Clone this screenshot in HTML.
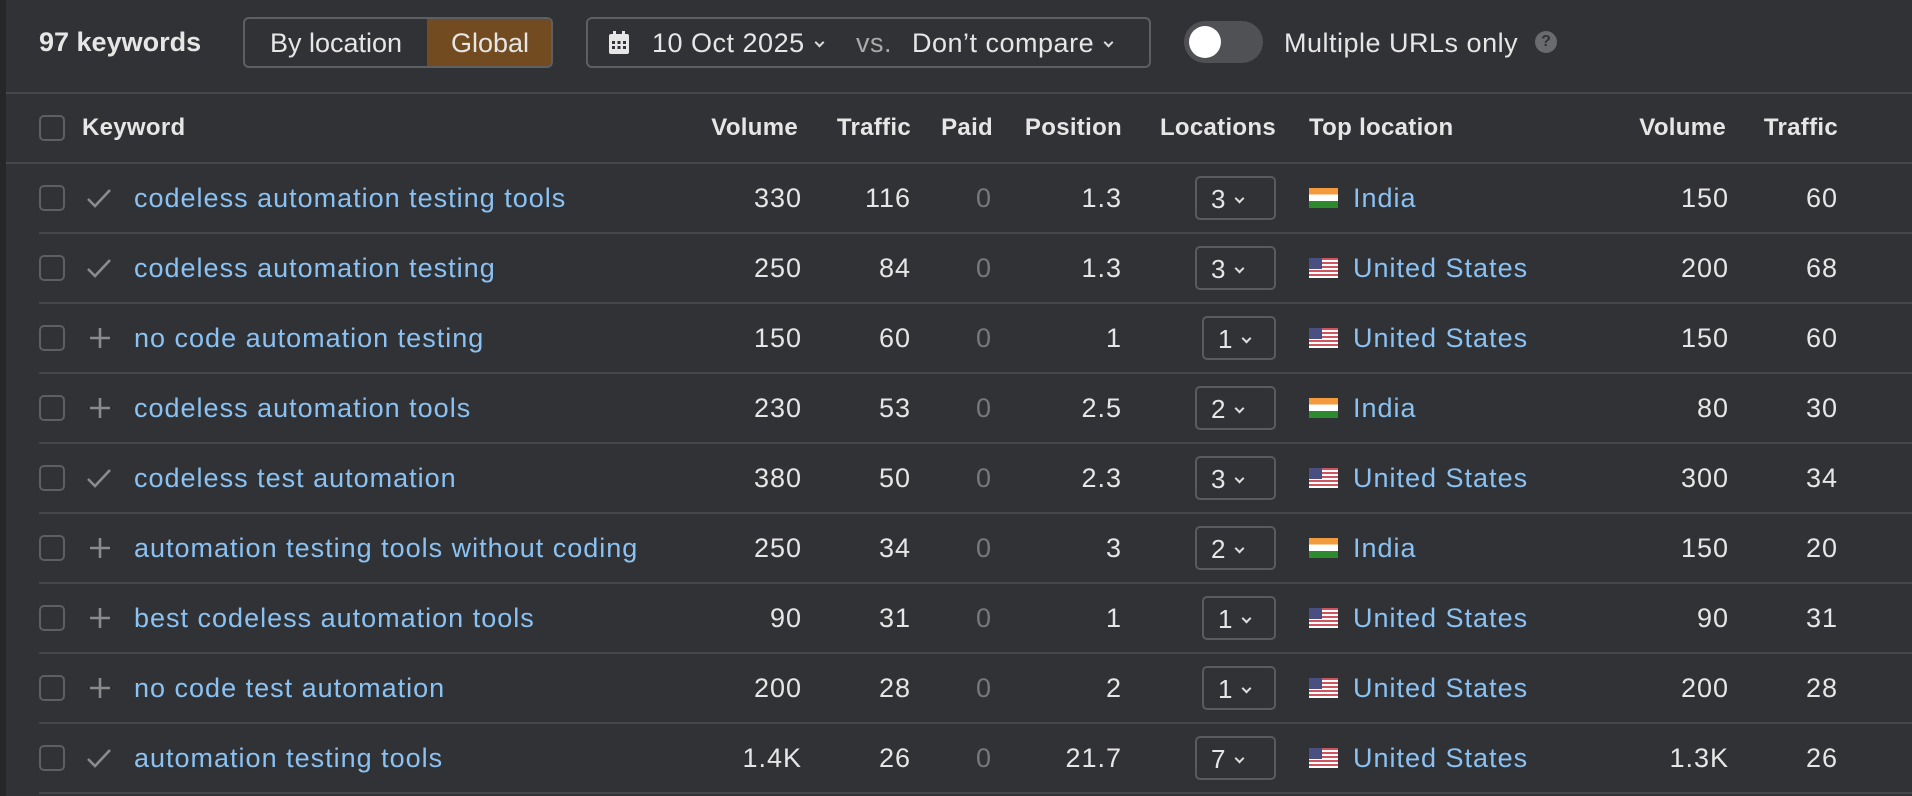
<!DOCTYPE html>
<html><head><meta charset="utf-8"><style>
*{box-sizing:border-box;margin:0;padding:0}
body{width:1912px;height:796px;background:#313235;font-family:"Liberation Sans",Arial,sans-serif;color:#e6e6e6;position:relative;overflow:hidden}
.strip{position:absolute;left:0;top:0;width:6px;height:796px;background:#262729}
.a{position:absolute;white-space:nowrap}
.hl{position:absolute;height:2px;background:#46474a}
.cb{position:absolute;width:26px;height:26px;border:2px solid #5e5f62;border-radius:5px}
.r{text-align:right}
.lnk{color:#8ac2f4}
.c{font-size:27px;letter-spacing:1px}
.h{font-size:24px;font-weight:bold;letter-spacing:0.3px}
.dd{position:absolute;height:44px;border:2px solid #5a5b5e;border-radius:5px;font-size:26px;line-height:42px;padding-left:14px}
.chev{display:inline-block;width:7px;height:7px;border-right:2px solid #ddd;border-bottom:2px solid #ddd;transform:rotate(45deg);margin-left:11px;position:relative;top:-6px}
.in{position:absolute;width:29px;height:20px;background:linear-gradient(#f39a3c 0 33%,#fff 33% 66%,#2e8a2e 66%)}
.us{position:absolute;width:29px;height:20px;background:repeating-linear-gradient(#d0545e 0 2px,#fff 2px 4px)}
.us:after{content:"";position:absolute;left:0;top:0;width:13px;height:11px;background:#4a4f82}
</style></head><body>
<div class="strip"></div>
<div class="a" style="left:39px;top:27px;font-size:27px;font-weight:bold">97 keywords</div>
<div class="a" style="left:243px;top:17px;width:310px;height:51px;border:2px solid #5e5f62;border-radius:6px;overflow:hidden">
<div class="a" style="left:0;top:0;width:182px;height:47px;line-height:49px;text-align:center;font-size:27px">By location</div>
<div class="a" style="left:182px;top:0;width:126px;height:47px;line-height:49px;text-align:center;font-size:27px;background:#724c20">Global</div></div>
<div class="a" style="left:586px;top:17px;width:565px;height:51px;border:2px solid #5e5f62;border-radius:6px;font-size:27px;line-height:49px;letter-spacing:0.5px">
<svg style="position:absolute;left:20px;top:12px" width="22" height="24" viewBox="0 0 22 24"><rect x="1" y="3" width="20" height="20" rx="2" fill="#e6e6e6"/><rect x="5" y="0" width="3" height="5" fill="#e6e6e6"/><rect x="14" y="0" width="3" height="5" fill="#e6e6e6"/><g fill="#313235"><rect x="4" y="10" width="3" height="3"/><rect x="9.5" y="10" width="3" height="3"/><rect x="15" y="10" width="3" height="3"/><rect x="4" y="15" width="3" height="3"/><rect x="9.5" y="15" width="3" height="3"/><rect x="15" y="15" width="3" height="3"/></g></svg>
<span class="a" style="left:64px">10 Oct 2025<span class="chev"></span></span>
<span class="a" style="left:268px;color:#aaa">vs.</span>
<span class="a" style="left:324px">Don’t compare<span class="chev"></span></span></div>
<div class="a" style="left:1184px;top:21px;width:79px;height:42px;border-radius:21px;background:#505155"><div class="a" style="left:5px;top:5px;width:32px;height:32px;border-radius:50%;background:#fff"></div></div>
<div class="a" style="left:1284px;top:28px;font-size:27px;letter-spacing:0.5px">Multiple URLs only</div>
<div class="a" style="left:1535px;top:31px;width:22px;height:22px;border-radius:50%;background:#6a6b6e;color:#313235;font-size:16px;font-weight:bold;text-align:center;line-height:22px">?</div>
<div class="hl" style="left:6px;top:92px;width:1906px"></div>
<div class="cb" style="left:39px;top:115px"></div>
<div class="a h" style="left:82px;top:114px">Keyword</div>
<div class="a r h" style="right:1114px;top:114px">Volume</div>
<div class="a r h" style="right:1001px;top:114px">Traffic</div>
<div class="a r h" style="right:919px;top:114px">Paid</div>
<div class="a r h" style="right:790px;top:114px">Position</div>
<div class="a r h" style="right:636px;top:114px">Locations</div>
<div class="a h" style="left:1309px;top:114px">Top location</div>
<div class="a r h" style="right:186px;top:114px">Volume</div>
<div class="a r h" style="right:74px;top:114px">Traffic</div>
<div class="hl" style="left:6px;top:162px;width:1906px"></div>
<div id="rows"></div>
<script>
const d=[["c","codeless automation testing tools","330","116","1.3","3","in","India","150","60"],
["c","codeless automation testing","250","84","1.3","3","us","United States","200","68"],
["p","no code automation testing","150","60","1","1","us","United States","150","60"],
["p","codeless automation tools","230","53","2.5","2","in","India","80","30"],
["c","codeless test automation","380","50","2.3","3","us","United States","300","34"],
["p","automation testing tools without coding","250","34","3","2","in","India","150","20"],
["p","best codeless automation tools","90","31","1","1","us","United States","90","31"],
["p","no code test automation","200","28","2","1","us","United States","200","28"],
["c","automation testing tools","1.4K","26","21.7","7","us","United States","1.3K","26"]];
let h="";d.forEach((r,i)=>{const c=198+i*70;const t=c-15;
const ic=r[0]=="c"?`<svg class="a" style="left:85px;top:${c-12}px" width="28" height="24" viewBox="0 0 28 24"><path d="M3 13l7 7L25 4" stroke="#8a8b8d" stroke-width="2.6" fill="none"/></svg>`:`<svg class="a" style="left:88px;top:${c-12}px" width="24" height="24" viewBox="0 0 24 24"><path d="M12 2v20M2 12h20" stroke="#8a8b8d" stroke-width="2.6"/></svg>`;
const w=r[5]=="1"?74:81;
h+=`<div class="cb" style="left:39px;top:${c-13}px"></div>${ic}
<div class="a lnk c" style="left:134px;top:${t}px">${r[1]}</div>
<div class="a r c" style="right:1110px;top:${t}px">${r[2]}</div>
<div class="a r c" style="right:1001px;top:${t}px">${r[3]}</div>
<div class="a r c" style="right:920px;top:${t}px;color:#77787b">0</div>
<div class="a r c" style="right:790px;top:${t}px">${r[4]}</div>
<div class="dd" style="left:${1276-w}px;width:${w}px;top:${c-22}px">${r[5]}<span class="chev"></span></div>
<div class="${r[6]}" style="left:1309px;top:${c-10}px"></div>
<div class="a lnk c" style="left:1353px;top:${t}px">${r[7]}</div>
<div class="a r c" style="right:183px;top:${t}px">${r[8]}</div>
<div class="a r c" style="right:74px;top:${t}px">${r[9]}</div>
<div class="hl" style="left:39px;top:${c+34}px;width:1873px"></div>`;});
document.getElementById("rows").innerHTML=h;
</script>
</body></html>
